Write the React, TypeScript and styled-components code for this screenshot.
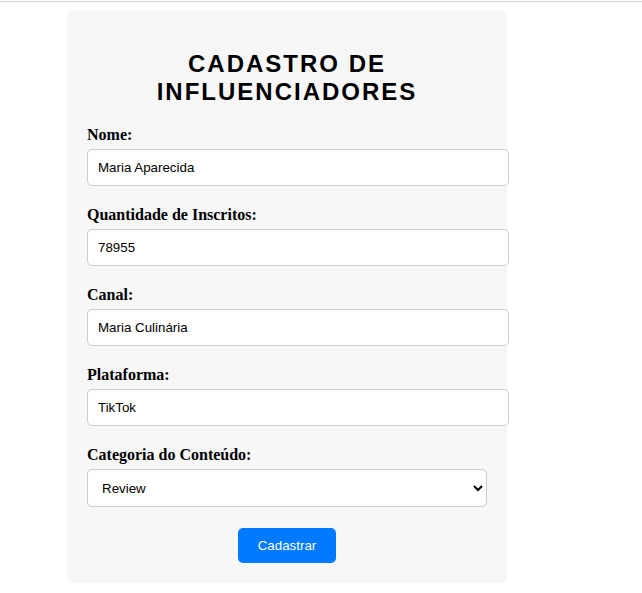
import React from "react";
import styled, { createGlobalStyle } from "styled-components";

const Global = createGlobalStyle`
  html, body { margin: 0; padding: 0; background: #fff; }
  body { font-family: "Liberation Serif", "Times New Roman", serif; }
`;

const Page = styled.div`
  padding-top: 1px;
`;

const Rule = styled.div`
  height: 1px;
  background: #cfcfcf;
`;

const Card = styled.form`
  width: 400px;
  margin: 8px 0 0 67px;
  padding: 20px;
  background: #f7f7f7;
  border-radius: 5px;
`;

const Title = styled.h2`
  margin: 20px 0;
  text-align: center;
  font-family: "Liberation Sans", Arial, sans-serif;
  font-size: 24px;
  font-weight: bold;
  letter-spacing: 2px;
  color: #000;
`;

const Label = styled.label`
  display: block;
  margin-bottom: 5px;
  font-family: "Liberation Serif", "Times New Roman", serif;
  font-weight: bold;
  font-size: 16px;
  color: #000;
`;

const Input = styled.input`
  display: block;
  width: 100%;
  padding: 10px;
  margin: 0 0 20px;
  border: 1px solid #ccc;
  border-radius: 5px;
  background: #fff;
  font-family: "Liberation Sans", Arial, sans-serif;
  font-size: 13.333px;
  color: #000;
  box-sizing: content-box;
  height: 15px;
`;

const Select = styled.select`
  display: block;
  width: 100%;
  height: 38px;
  padding: 10px;
  margin: 0 0 20px;
  border: 1px solid #ccc;
  border-radius: 5px;
  background: #fff;
  font-family: "Liberation Sans", Arial, sans-serif;
  font-size: 13.333px;
  color: #000;
  box-sizing: border-box;
`;

const Actions = styled.div`
  display: flex;
  justify-content: center;
  padding-top: 1px;
`;

const Button = styled.button`
  height: 35px;
  padding: 10px 20px;
  border: none;
  border-radius: 5px;
  background: #007bff;
  color: #fff;
  font-family: "Liberation Sans", Arial, sans-serif;
  font-size: 13.333px;
  cursor: pointer;
`;

const fields = [
  { id: "nome", label: "Nome:", value: "Maria Aparecida" },
  { id: "inscritos", label: "Quantidade de Inscritos:", value: "78955" },
  { id: "canal", label: "Canal:", value: "Maria Culinária" },
  { id: "plataforma", label: "Plataforma:", value: "TikTok" },
];

export default function App() {
  return (
    <>
      <Global />
      <Page>
        <Rule />
        <Card onSubmit={(e) => e.preventDefault()}>
          <Title>CADASTRO DE INFLUENCIADORES</Title>
          {fields.map((f) => (
            <React.Fragment key={f.id}>
              <Label htmlFor={f.id}>{f.label}</Label>
              <Input id={f.id} defaultValue={f.value} />
            </React.Fragment>
          ))}
          <Label htmlFor="categoria">Categoria do Conteúdo:</Label>
          <Select id="categoria" defaultValue="Review">
            <option>Review</option>
            <option>Tutorial</option>
            <option>Entretenimento</option>
          </Select>
          <Actions>
            <Button type="submit">Cadastrar</Button>
          </Actions>
        </Card>
      </Page>
    </>
  );
}
